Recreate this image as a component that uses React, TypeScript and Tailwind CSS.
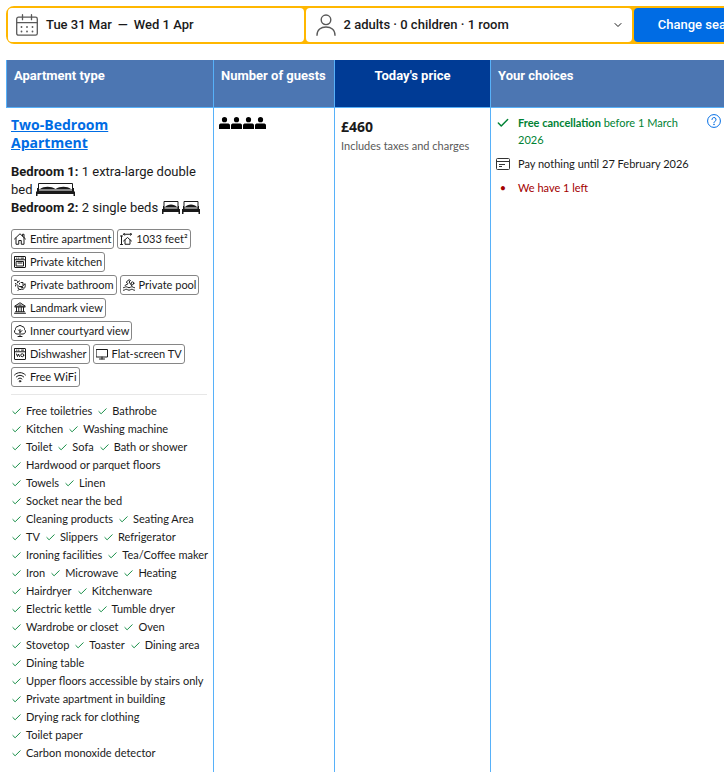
import type { ReactNode } from 'react';
import { Check, ChevronDown } from 'lucide-react';

type IconProps = { children: ReactNode };

const FacilityIcon = ({ children }: IconProps) => (
  <svg
    viewBox="0 0 24 24"
    className="size-3 shrink-0"
    fill="none"
    stroke="currentColor"
    strokeWidth="2"
    strokeLinecap="round"
    strokeLinejoin="round"
    aria-hidden="true"
  >
    {children}
  </svg>
);

const facilities: { label: string; icon: ReactNode }[] = [
  {
    label: 'Entire apartment',
    icon: (
      <path d="M1 12 12 1.500 23 12M4 10v12.500h5.500V15h5v7.500H20V10M17 6V2.500h3V9" />
    ),
  },
  {
    label: '1033 feet²',
    icon: (
      <path d="M3 6v17M1 6h4M1 23h4M7 2.500h16M9 .5l-2 2 2 2M21 .5l2 2-2 2M7 16l8-7 8 7M10 14v8.500h10V14" />
    ),
  },
  {
    label: 'Private kitchen',
    icon: (
      <>
        <rect x="1" y="1" width="22" height="22" rx="1" />
        <path d="M1 7.500h22M5 4.300h1M9 4.300h1M14 4.300h5M5 11h14v9H5zM8 14h8" />
      </>
    ),
  },
  {
    label: 'Private bathroom',
    icon: (
      <>
        <path d="M1 2.500h4l3 3M6 8l5-4M3 9v1M6 11v1M3 13v1M11 9v1" />
        <path d="M8 13v4a4 4 0 0 0 4 4h2M11 15h5c3 0 3-5 6-5M22 10c2 5-1 11-6 11M10 21l-2 2M14 7h4v5" />
        <circle cx="16" cy="17" r="1.500" />
      </>
    ),
  },
  {
    label: 'Private pool',
    icon: (
      <>
        <circle cx="19" cy="8.500" r="2.700" />
        <path d="M4 13 10 9.500 6.500 6 12 1.500l3 1.500-3 3 6 8M1 17.500c3 0 3-2 5.500-2s3 2 5.500 2 3-2 5.500-2 3 2 5.500 2M1 22.500c3 0 3-2 5.500-2s3 2 5.500 2 3-2 5.500-2 3 2 5.500 2" />
      </>
    ),
  },
  {
    label: 'Landmark view',
    icon: (
      <path d="M2 8 12 1.500 22 8zM2 10h20M5 11v8M9.500 11v8M14.500 11v8M19 11v8M3 19.500h18M1 22.500h22M10 6h4" />
    ),
  },
  {
    label: 'Inner courtyard view',
    icon: (
      <path d="M12 23V9M8 23h8M12 15l4-4M12 13 9 10M9 18H6a5 5 0 0 1-3-9 5 5 0 0 1 5-6 5 5 0 0 1 8 0 5 5 0 0 1 5 6 5 5 0 0 1-3 9h-3" />
    ),
  },
  {
    label: 'Dishwasher',
    icon: (
      <>
        <rect x="1" y="1" width="22" height="22" rx="1" />
        <path d="M1 7.500h22M5 4.300h1M9 4.300h1M15 4.300h4M5 12l2 5 2-5 2 5" />
        <circle cx="16.500" cy="14.500" r="3" />
      </>
    ),
  },
  {
    label: 'Flat-screen TV',
    icon: <path d="M1 3h22v15H1zM12 18v4M7 22h10" />,
  },
  {
    label: 'Free WiFi',
    icon: (
      <>
        <path d="M1 8C7 1.500 17 1.500 23 8M4.500 12c4.500-4.500 10.500-4.500 15 0M8 16c2.500-2.500 5.500-2.500 8 0" />
        <circle cx="12" cy="20.500" r="1.500" />
      </>
    ),
  },
];

const amenityRows = [
  ['Free toiletries', 'Bathrobe'],
  ['Kitchen', 'Washing machine'],
  ['Toilet', 'Sofa', 'Bath or shower'],
  ['Hardwood or parquet floors'],
  ['Towels', 'Linen'],
  ['Socket near the bed'],
  ['Cleaning products', 'Seating Area'],
  ['TV', 'Slippers', 'Refrigerator'],
  ['Ironing facilities', 'Tea/Coffee maker'],
  ['Iron', 'Microwave', 'Heating'],
  ['Hairdryer', 'Kitchenware'],
  ['Electric kettle', 'Tumble dryer'],
  ['Wardrobe or closet', 'Oven'],
  ['Stovetop', 'Toaster', 'Dining area'],
  ['Dining table'],
  ['Upper floors accessible by stairs only'],
  ['Private apartment in building'],
  ['Drying rack for clothing'],
  ['Toilet paper'],
  ['Carbon monoxide detector'],
];

const CalendarIcon = () => (
  <svg
    viewBox="0 0 22 22"
    className="size-[22px] shrink-0"
    fill="none"
    stroke="#595959"
    strokeWidth="1.3"
    strokeLinecap="round"
    aria-hidden="true"
  >
    <rect x="0.7" y="3.200" width="20.600" height="18" rx="1.800" />
    <path d="M1 8.700h20M6.500.7v5M15.500.7v5" />
    <path
      d="M5.500 13h.01M11 13h.01M16.500 13h.01M5.500 17.500h.01M11 17.500h.01M16.500 17.500h.01"
      strokeWidth="1.800"
    />
  </svg>
);

const PersonIcon = () => (
  <svg
    viewBox="0 0 20 22"
    className="h-[22px] w-5 shrink-0"
    fill="none"
    stroke="#595959"
    strokeWidth="1.4"
    strokeLinecap="round"
    aria-hidden="true"
  >
    <circle cx="10" cy="5.800" r="4.800" />
    <path d="M1 21.300c0-5.500 4-8.300 9-8.300s9 2.800 9 8.300" />
  </svg>
);

const DoubleBed = () => (
  <svg
    viewBox="0 0 39 14"
    className="inline-block h-[14px] w-[39px] align-[-2px]"
    aria-hidden="true"
  >
    <path d="M2.500 7V1.500h34V7" fill="none" stroke="#1a1a1a" />
    <path d="M4 7c4-3 11-3 15.500 0 4.500-3 11.500-3 15.500 0z" fill="#1a1a1a" />
    <path d="M3 7h33v2.500H3z" fill="#8a8a8a" />
    <path d="M1 9h37l1 1v4h-1.500v-2h-36v2H0v-4zM1 9V6h2v3zM38 9V6h-2v3z" fill="#1a1a1a" />
  </svg>
);

const SingleBed = () => (
  <svg
    viewBox="0 0 20 14"
    className="inline-block h-[14px] w-5 align-[-2px]"
    aria-hidden="true"
  >
    <path d="M3 6V1.500h14V6" fill="none" stroke="#1a1a1a" />
    <path d="M4 7c2.500-3.500 9.500-3.500 12 0z" fill="#1a1a1a" />
    <path d="M3 7h14v2H3z" fill="#8a8a8a" />
    <path d="M1 9h18v5h-1.500v-2h-15v2H1zM2 9V6h1.500v3zM18 9V6h-1.500v3z" fill="#1a1a1a" />
  </svg>
);

const Guest = () => (
  <svg viewBox="0 0 11 12" className="h-3 w-[11px]" aria-hidden="true">
    <circle cx="5.500" cy="2.700" r="2.600" />
    <path d="M0 12V8.500C0 7 1 6.500 2.500 6.500h6C10 6.500 11 7 11 8.500V12z" />
  </svg>
);

const SearchBar = () => (
  <form
    className="-mr-[46px] grid h-[38px] grid-cols-[296fr_327fr_134fr] gap-[2px] rounded-lg border-2 border-[#ffb700] bg-[#ffb700] text-[13px] font-medium text-[#1a1a1a]"
    onSubmit={(e) => e.preventDefault()}
  >
    <button type="button" className="flex items-center rounded bg-white pl-2 text-left">
      <CalendarIcon />
      <span className="ml-2">Tue 31 Mar</span>
      <span className="mx-[6px]">—</span>
      <span>Wed 1 Apr</span>
    </button>
    <button type="button" className="flex items-center rounded bg-white pr-2 pl-[10px] text-left">
      <PersonIcon />
      <span className="ml-2">2 adults · 0 children · 1 room</span>
      <ChevronDown className="ml-auto size-3" strokeWidth={2} />
    </button>
    <button type="submit" className="rounded bg-[#006ce4] text-white">
      Change search
    </button>
  </form>
);

const RoomDetails = () => (
  <>
    <a
      href="#apartment"
      className="block w-32 font-['Open_Sans','Noto_Sans',sans-serif] text-[14px] leading-[18px] font-bold text-[#006ce4] underline"
    >
      Two-Bedroom Apartment
    </a>
    <div className="mt-[11px] text-[13px] leading-[18px]">
      <p>
        <b>Bedroom 1:</b> 1 extra-large double bed <DoubleBed />
      </p>
      <p>
        <b>Bedroom 2:</b> 2 single beds <SingleBed />
        <SingleBed />
      </p>
    </div>
    <ul className="mt-3 flex flex-wrap gap-[3px] font-[Lato,'Open_Sans',sans-serif] text-[11px]">
      {facilities.map(({ label, icon }) => (
        <li
          key={label}
          className="flex h-5 items-center gap-1 rounded-[3px] border border-[#868686] px-[2px] whitespace-nowrap"
        >
          <FacilityIcon>{icon}</FacilityIcon>
          {label}
        </li>
      ))}
    </ul>
    <hr className="mt-[7px] mr-1 border-[#e7e7e7]" />
    <div className="mt-[7px] font-[Lato,'Open_Sans',sans-serif] text-[11px] leading-[18px]">
      {amenityRows.map((row) => (
        <ul key={row[0]} className="flex gap-[5px]">
          {row.map((name) => (
            <li key={name} className="flex items-center gap-1 whitespace-nowrap">
              <Check className="size-[11px] text-[#008234]" strokeWidth={2} />
              {name}
            </li>
          ))}
        </ul>
      ))}
    </div>
  </>
);

const Choices = () => (
  <div className="flex items-start gap-2">
    <ul className="flex flex-1 flex-col gap-[7px] font-[Lato,'Open_Sans',sans-serif] text-[11px] leading-[17px]">
      <li className="flex gap-2 text-[#008234]">
        <Check className="mt-[2px] size-[14px] shrink-0" strokeWidth={2.5} />
        <span>
          <b>Free cancellation</b> before 1 March
          <br />
          2026
        </span>
      </li>
      <li className="flex gap-2">
        <svg
          viewBox="0 0 14 12"
          className="mt-[3px] h-3 w-[14px] shrink-0"
          fill="none"
          stroke="#333"
          aria-hidden="true"
        >
          <rect x="0.500" y="0.500" width="13" height="11" rx="1" />
          <path d="M0 3.500h14M3 6.500h6M3 8.500h3" />
        </svg>
        <span>Pay nothing until 27 February 2026</span>
      </li>
      <li className="flex gap-2 text-[#a30000]">
        <span className="w-[14px] shrink-0 text-center">•</span>
        <span>We have 1 left</span>
      </li>
    </ul>
    <button type="button" aria-label="Cancellation details" className="text-[#006ce4]">
      <svg viewBox="0 0 24 24" className="size-[14px]" fill="none" stroke="currentColor" strokeWidth="1.700">
        <circle cx="12" cy="12" r="11" />
        <path d="M8.500 9.500a3.500 3.500 0 1 1 5 3.200c-1 .6-1.500 1-1.500 2.300" strokeLinecap="round" />
        <circle cx="12" cy="18" r="0.700" />
      </svg>
    </button>
  </div>
);

export default function App() {
  return (
    <main className="min-h-screen overflow-hidden bg-white pt-[6px] pl-[6px] font-[Roboto,'Open_Sans',sans-serif] text-[#1a1a1a]">
      <SearchBar />
      <table className="mt-4 w-full table-fixed border-separate border-spacing-0">
        <colgroup>
          <col className="w-[208px]" />
          <col className="w-[121px]" />
          <col className="w-[156px]" />
          <col />
        </colgroup>
        <thead className="text-left align-top text-[13px] leading-[18px] text-white">
          <tr className="h-12 bg-[#4c76b2]">
            <th className="border-x border-b border-[#57b1f9] px-[7px] pt-[7px] align-top font-bold">
              Apartment type
            </th>
            <th className="border-r border-b border-[#57b1f9] px-[7px] pt-[7px] align-top font-bold whitespace-nowrap">
              Number of guests
            </th>
            <th className="border-r border-b border-[#57b1f9] bg-[#003b95] pt-[7px] text-center align-top font-bold">
              Today's price
            </th>
            <th className="border-b border-[#57b1f9] px-[7px] pt-[7px] align-top font-bold">
              Your choices
            </th>
          </tr>
        </thead>
        <tbody>
          <tr className="h-[700px] align-top">
            <td className="border-r border-[#57b1f9] pt-2 pr-[2px] pl-[5px]">
              <RoomDetails />
            </td>
            <td className="border-r border-[#57b1f9] pt-[9px] pl-[5px]">
              <div className="flex gap-px" role="img" aria-label="4 guests">
                <Guest />
                <Guest />
                <Guest />
                <Guest />
              </div>
            </td>
            <td className="border-r border-[#57b1f9] pt-[10px] pl-[6px]">
              <p className="font-['Open_Sans','Noto_Sans',sans-serif] text-[14px] leading-[18px] font-bold">
                £460
              </p>
              <p className="font-[Lato,'Open_Sans',sans-serif] text-[11px] leading-5 text-[#595959]">
                Includes taxes and charges
              </p>
            </td>
            <td className="pt-[6px] pr-[3px] pl-[5px]">
              <Choices />
            </td>
          </tr>
        </tbody>
      </table>
    </main>
  );
}
